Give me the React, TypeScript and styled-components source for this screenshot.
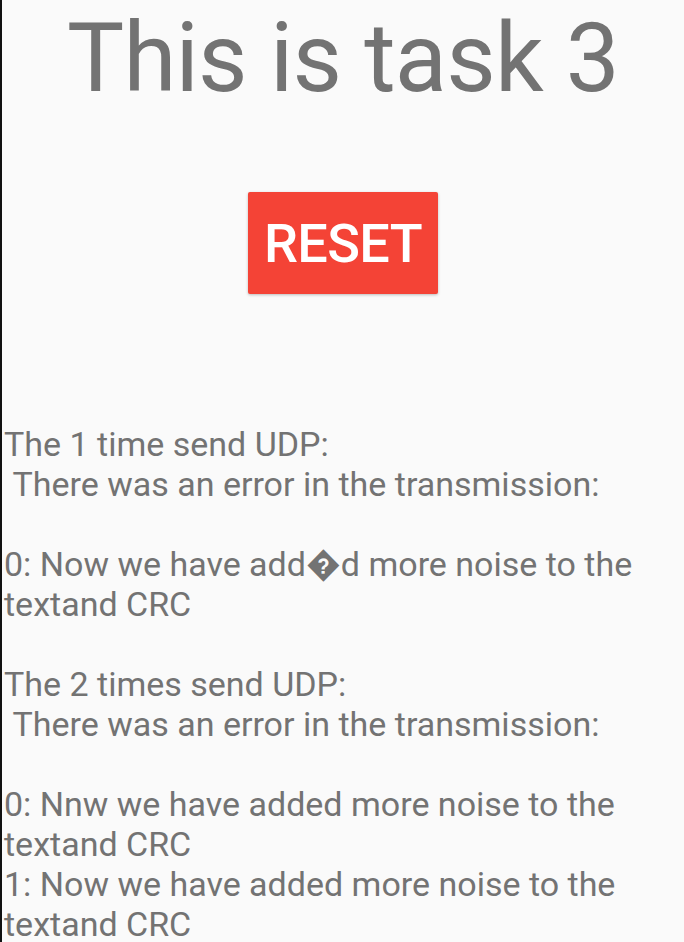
import React from "react";
import styled, { createGlobalStyle } from "styled-components";

const Global = createGlobalStyle`
  html, body { margin: 0; padding: 0; background: #fafafa; }
  body { font-family: Roboto, "Noto Sans", sans-serif; }
`;

const Screen = styled.div`
  min-height: 942px;
  box-sizing: border-box;
  border-left: 2px solid #111;
  background: #fafafa;
  display: flex;
  flex-direction: column;
  overflow: hidden;
`;

const Title = styled.h1`
  margin: 0;
  padding-top: 6px;
  font-family: Roboto, sans-serif;
  font-weight: 400;
  font-size: 96px;
  line-height: 104px;
  letter-spacing: -0.8px;
  color: #737373;
  text-align: center;
`;

const ButtonRow = styled.div`
  display: flex;
  justify-content: center;
  padding-top: 82px;
`;

const ResetButton = styled.button`
  width: 190px;
  height: 102px;
  border: none;
  border-radius: 2px;
  background: #f44336;
  color: #ffffff;
  font-family: Roboto, sans-serif;
  font-size: 54px;
  font-weight: 500;
  letter-spacing: -0.6px;
  padding: 0;
  box-shadow: 0 1px 3px rgba(0, 0, 0, 0.25);
`;

const Log = styled.div`
  margin-top: 130px;
  padding-left: 2px;
  font-family: Roboto, sans-serif;
  font-size: 34px;
  line-height: 40px;
  color: #737373;
  white-space: pre-wrap;
`;

const text =
  "The 1 time send UDP:\n There was an error in the transmission:\n\n0: Now we have add\uFFFDd more noise to the textand CRC\n\nThe 2 times send UDP:\n There was an error in the transmission:\n\n0: Nnw we have added more noise to the textand CRC\n1: Now we have added more noise to the textand CRC";

export default function App() {
  return (
    <Screen>
      <Global />
      <Title>This is task 3</Title>
      <ButtonRow>
        <ResetButton>RESET</ResetButton>
      </ButtonRow>
      <Log>{text}</Log>
    </Screen>
  );
}
